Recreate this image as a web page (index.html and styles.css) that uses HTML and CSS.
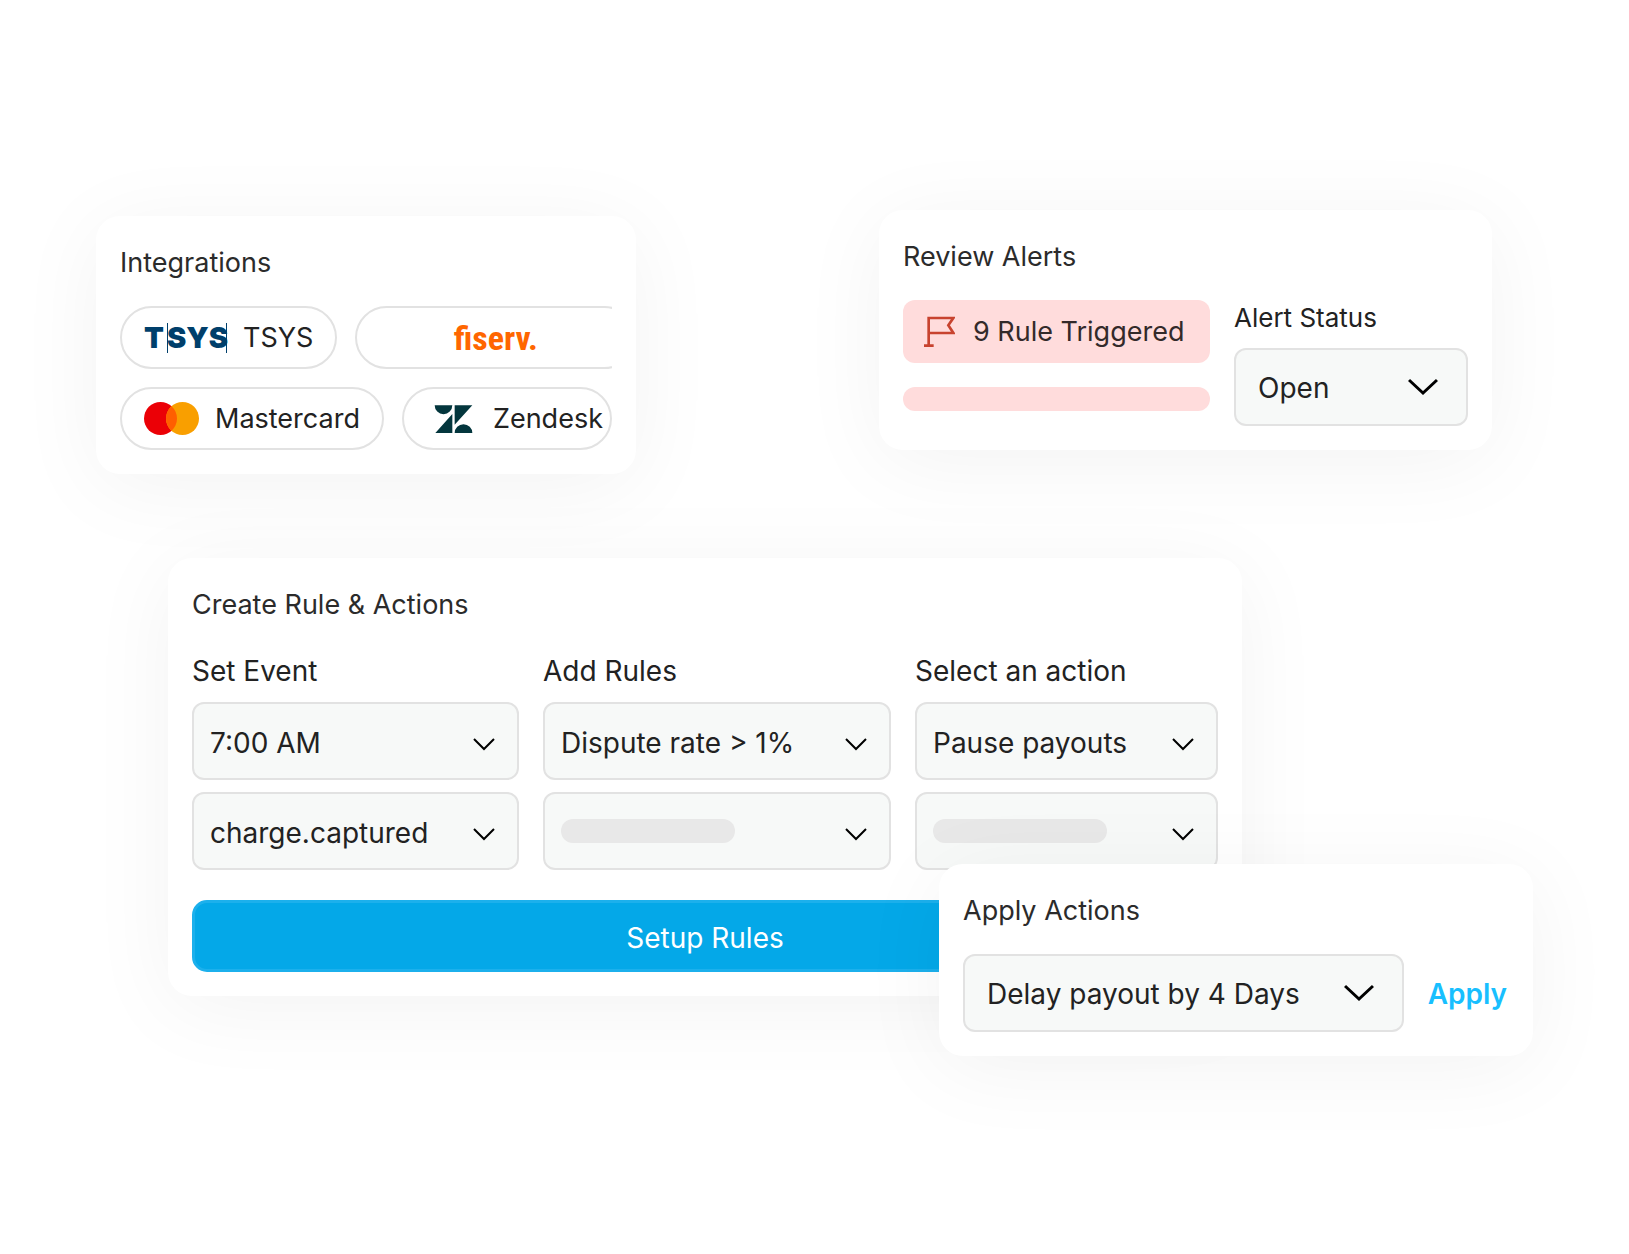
FILE: index.html
```html
<!DOCTYPE html>
<html lang="en">
<head>
    <meta charset="UTF-8">
    <meta name="viewport" content="width=device-width, initial-scale=1.0">
    <title>Rules &amp; Actions</title>
    <link rel="stylesheet" href="styles.css">
</head>
<body>
    <main class="stage">
        <div class="top-row">
            <section class="card integrations">
                <h2>Integrations</h2>
                <div class="pill-list">
                    <div class="pill-row">
                        <div class="pill">
                            <svg class="logo-tsys" viewBox="0 0 83 32" aria-hidden="true">
                                <text x="0" y="26">T</text>
                                <text x="23" y="26">SYS</text>
                                <path d="M23.5 1v30M82.5 1v30" stroke="#003f6b" stroke-width="1"/>
                            </svg>
                            <span>TSYS</span>
                        </div>
                        <div class="pill pill-wide">
                            <span class="logo-fiserv">fiserv.</span>
                        </div>
                    </div>
                    <div class="pill-row">
                        <div class="pill">
                            <svg class="logo-mastercard" viewBox="0 0 55 33" aria-hidden="true">
                                <circle cx="16.5" cy="16.5" r="16.5" fill="#eb0006"/>
                                <circle cx="38.5" cy="16.5" r="16.5" fill="#f99f00"/>
                                <path d="M27.5 4.2a16.5 16.5 0 0 1 0 24.6a16.5 16.5 0 0 1 0-24.6z" fill="#ff5f00"/>
                            </svg>
                            <span>Mastercard</span>
                        </div>
                        <div class="pill pill-fill">
                            <svg class="logo-zendesk" viewBox="-26 0 153 84" aria-hidden="true">
                                <path d="M0 1h53a26.500 26.500 0 0 1-53 0zM53 27v57H2zM60 1h53L60 59zM60 84a26.500 26.500 0 0 1 53 0z" fill="#03363d"/>
                            </svg>
                            <span>Zendesk</span>
                        </div>
                    </div>
                </div>
            </section>

            <section class="card review">
                <h2>Review Alerts</h2>
                <div class="review-body">
                    <div class="alerts">
                        <div class="alert-badge">
                            <svg class="flag" viewBox="0 0 96 96" aria-hidden="true">
                                <path d="M17 89V6h74L76 28l15 23H17M3 89h29" fill="none" stroke="#c8432f" stroke-width="8"/>
                            </svg>
                            <span>9 Rule Triggered</span>
                        </div>
                        <div class="alert-bar"></div>
                    </div>
                    <div class="status">
                        <label for="alert-status">Alert Status</label>
                        <div class="select select-large">
                            <select id="alert-status">
                                <option>Open</option>
                            </select>
                            <svg viewBox="0 0 30 18" aria-hidden="true"><path d="M1 2l14 13L29 2"/></svg>
                        </div>
                    </div>
                </div>
            </section>
        </div>

        <section class="card create">
            <h2>Create Rule &amp; Actions</h2>
            <form class="rule-form" onsubmit="return false">
                <div class="fields">
                    <div class="field">
                        <label for="event-time">Set Event</label>
                        <div class="select">
                            <select id="event-time">
                                <option>7:00 AM</option>
                            </select>
                            <svg viewBox="0 0 22 13" aria-hidden="true"><path d="M1 1l10 10L21 1"/></svg>
                        </div>
                        <div class="select">
                            <select aria-label="Event type">
                                <option>charge.captured</option>
                            </select>
                            <svg viewBox="0 0 22 13" aria-hidden="true"><path d="M1 1l10 10L21 1"/></svg>
                        </div>
                    </div>
                    <div class="field">
                        <label for="rule">Add Rules</label>
                        <div class="select">
                            <select id="rule">
                                <option>Dispute rate &gt; 1%</option>
                            </select>
                            <svg viewBox="0 0 22 13" aria-hidden="true"><path d="M1 1l10 10L21 1"/></svg>
                        </div>
                        <div class="select">
                            <select aria-label="Second rule">
                                <option></option>
                            </select>
                            <span class="skeleton"></span>
                            <svg viewBox="0 0 22 13" aria-hidden="true"><path d="M1 1l10 10L21 1"/></svg>
                        </div>
                    </div>
                    <div class="field">
                        <label for="action">Select an action</label>
                        <div class="select">
                            <select id="action">
                                <option>Pause payouts</option>
                            </select>
                            <svg viewBox="0 0 22 13" aria-hidden="true"><path d="M1 1l10 10L21 1"/></svg>
                        </div>
                        <div class="select">
                            <select aria-label="Second action">
                                <option></option>
                            </select>
                            <span class="skeleton"></span>
                            <svg viewBox="0 0 22 13" aria-hidden="true"><path d="M1 1l10 10L21 1"/></svg>
                        </div>
                    </div>
                </div>
                <button type="submit" class="setup-btn">Setup Rules</button>
            </form>
        </section>

        <!-- floats over the bottom right corner of the rule card -->
        <section class="card apply">
            <h2>Apply Actions</h2>
            <div class="apply-row">
                <div class="select select-large">
                    <select aria-label="Action to apply">
                        <option>Delay payout by 4 Days</option>
                    </select>
                    <svg viewBox="0 0 30 18" aria-hidden="true"><path d="M1 2l14 13L29 2"/></svg>
                </div>
                <button type="button" class="apply-btn">Apply</button>
            </div>
        </section>
    </main>
</body>
</html>
```

FILE: styles.css
```css
* {
    box-sizing: border-box;
}
body {
    margin: 0;
    padding: 210px 96px 120px;
    background-color: #fff;
    color: #222;
    font-family: Inter, "Liberation Sans", sans-serif;
    font-size: 28px;
}
.stage {
    position: relative;
    padding-bottom: 60px;
}
.card {
    padding: 24px;
    border-radius: 24px;
    background-color: #fff;
    box-shadow: 0 12px 88px rgba(0, 0, 0, 0.05);
}
h2 {
    margin: 0 0 20px;
    font-size: 27px;
    font-weight: 400;
    line-height: 46px;
    color: #2b2b2b;
}

/* top row */
.top-row {
    display: grid;
    grid-template-columns: 540fr 613fr;
    align-items: start;
    gap: 243px;
    padding-right: 41px;
    margin-bottom: 84px;
}
.integrations {
    min-width: 0;
    margin-top: 6px;
}
.pill-list {
    display: flex;
    flex-direction: column;
    gap: 18px;
    overflow: hidden;
}
.pill-row {
    display: flex;
    gap: 18px;
}
.pill {
    display: flex;
    flex: none;
    align-items: center;
    gap: 16px;
    height: 63px;
    padding: 0 22px;
    border: 2px solid #e2e2e2;
    border-radius: 32px;
    font-size: 27px;
    white-space: nowrap;
}
.pill-wide {
    width: 281px;
    justify-content: center;
}
.pill-fill {
    flex: 1;
    min-width: 0;
    padding-right: 0;
}
.logo-tsys {
    width: 83px;
    height: 32px;
    overflow: visible;
    font-size: 29px;
    font-weight: 900;
    fill: #003f6b;
}
.logo-fiserv {
    font-family: "Roboto Condensed", Roboto, sans-serif;
    font-size: 34px;
    font-weight: 700;
    color: #ff6600;
}
.logo-mastercard {
    width: 55px;
    height: 33px;
}
.logo-zendesk {
    width: 51px;
    height: 28px;
}

/* review alerts */
.review-body {
    display: grid;
    grid-template-columns: 307fr 234fr;
    gap: 24px;
}
.alert-badge {
    display: flex;
    align-items: center;
    gap: 18px;
    height: 63px;
    padding: 0 20px;
    border-radius: 12px;
    background-color: #ffdcdc;
    color: #332a2a;
    font-size: 27px;
    white-space: nowrap;
}
.flag {
    flex: none;
    width: 32px;
    height: 32px;
}
.alert-bar {
    height: 24px;
    margin-top: 24px;
    border-radius: 12px;
    background-color: #ffdcdc;
}
.status label {
    display: block;
    margin-bottom: 12px;
    font-size: 26px;
    line-height: 36px;
}

/* drop-downs */
.select {
    position: relative;
}
.select select {
    display: block;
    width: 100%;
    height: 78px;
    padding: 3px 52px 0 16px;
    border: 2px solid #e2e2e2;
    border-radius: 12px;
    background-color: #f7f9f8;
    color: #222;
    font-family: inherit;
    font-size: 28px;
    appearance: none;
}
.select svg {
    position: absolute;
    top: 36px;
    right: 24px;
    width: 22px;
    height: 13px;
    fill: none;
    stroke: #000;
    stroke-width: 2;
    pointer-events: none;
}
.select-large select {
    padding: 2px 64px 0 22px;
}
.select-large svg {
    top: 30px;
    right: 30px;
    width: 30px;
    height: 18px;
    stroke-width: 3;
}
.skeleton {
    position: absolute;
    top: 27px;
    left: 18px;
    width: 174px;
    height: 24px;
    border-radius: 12px;
    background-color: #e8e8e8;
    pointer-events: none;
}

/* create rule */
.create {
    margin: 0 291px 0 72px;
}
.fields {
    display: grid;
    grid-template-columns: 327fr 348fr 303fr;
    gap: 24px;
}
.field {
    display: flex;
    flex-direction: column;
    gap: 12px;
}
.field label {
    padding-top: 4px;
    line-height: 38px;
}
.setup-btn {
    display: block;
    width: 100%;
    height: 72px;
    margin-top: 30px;
    padding-top: 4px;
    border: 3px solid #1cb0ec;
    border-radius: 15px;
    background-color: #04a8e8;
    color: #fff;
    font-family: inherit;
    font-size: 28px;
    cursor: pointer;
}

/* apply actions */
.apply {
    position: absolute;
    right: 0;
    bottom: 0;
    width: 594px;
}
.apply-row {
    display: flex;
    align-items: center;
    gap: 24px;
}
.apply-row .select {
    flex: 1;
}
.apply-btn {
    padding: 2px 2px 0 0;
    border: none;
    background: none;
    color: #18bfff;
    font-family: inherit;
    font-size: 28px;
    font-weight: 600;
    cursor: pointer;
}
```
